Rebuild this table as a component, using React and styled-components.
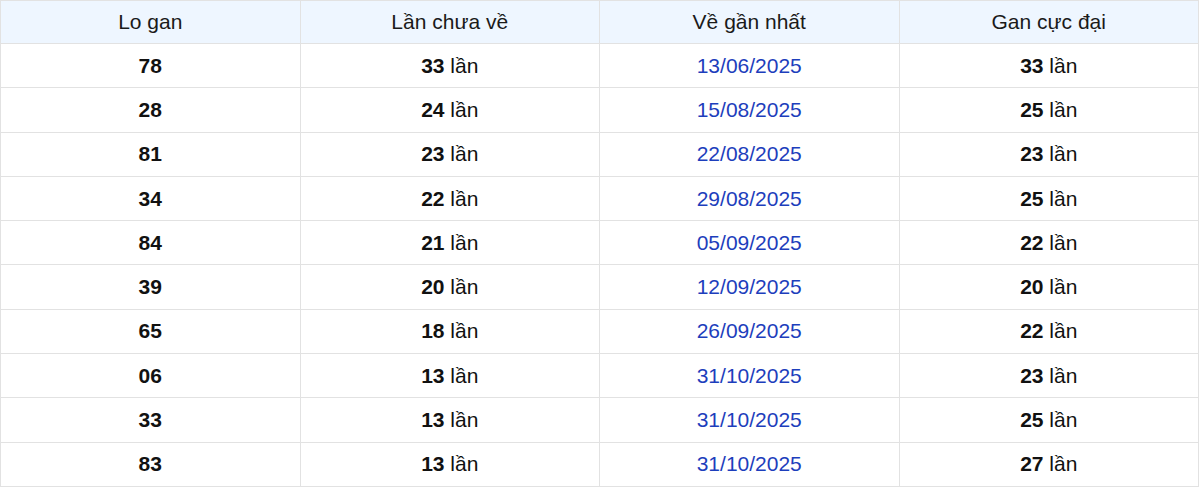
import React from 'react';
import styled, { createGlobalStyle } from 'styled-components';

const GlobalStyle = createGlobalStyle`
  body {
    margin: 0;
    background: #fff;
    font-family: "Liberation Sans", Arial, sans-serif;
  }
`;

const Table = styled.table`
  width: 1199px;
  border-collapse: collapse;
  table-layout: fixed;
  font-size: 21px;
  color: #111;
`;

const HeadCell = styled.th`
  height: 42px;
  padding: 0;
  font-weight: 400;
  text-align: center;
  background: #eef6ff;
  border: 1px solid #e2e2e2;
  color: #1a1a1a;
`;

const Cell = styled.td`
  height: 43.3px;
  padding: 0;
  text-align: center;
  border: 1px solid #e2e2e2;
  color: ${p => (p.date ? '#1d3ebc' : '#111')};
  font-weight: ${p => (p.bold ? 700 : 400)};
`;

const Num = styled.b`
  font-weight: 700;
`;

const rows = [
  ['78', 33, '13/06/2025', 33],
  ['28', 24, '15/08/2025', 25],
  ['81', 23, '22/08/2025', 23],
  ['34', 22, '29/08/2025', 25],
  ['84', 21, '05/09/2025', 22],
  ['39', 20, '12/09/2025', 20],
  ['65', 18, '26/09/2025', 22],
  ['06', 13, '31/10/2025', 23],
  ['33', 13, '31/10/2025', 25],
  ['83', 13, '31/10/2025', 27]
];

const Times = ({ n }) => (
  <>
    <Num>{n}</Num> lần
  </>
);

export default function App() {
  return (
    <>
      <GlobalStyle />
      <Table>
        <thead>
          <tr>
            <HeadCell>Lo gan</HeadCell>
            <HeadCell>Lần chưa về</HeadCell>
            <HeadCell>Về gần nhất</HeadCell>
            <HeadCell>Gan cực đại</HeadCell>
          </tr>
        </thead>
        <tbody>
          {rows.map(([lo, count, date, max], i) => (
            <tr key={i}>
              <Cell bold>{lo}</Cell>
              <Cell>
                <Times n={count} />
              </Cell>
              <Cell date>{date}</Cell>
              <Cell>
                <Times n={max} />
              </Cell>
            </tr>
          ))}
        </tbody>
      </Table>
    </>
  );
}
